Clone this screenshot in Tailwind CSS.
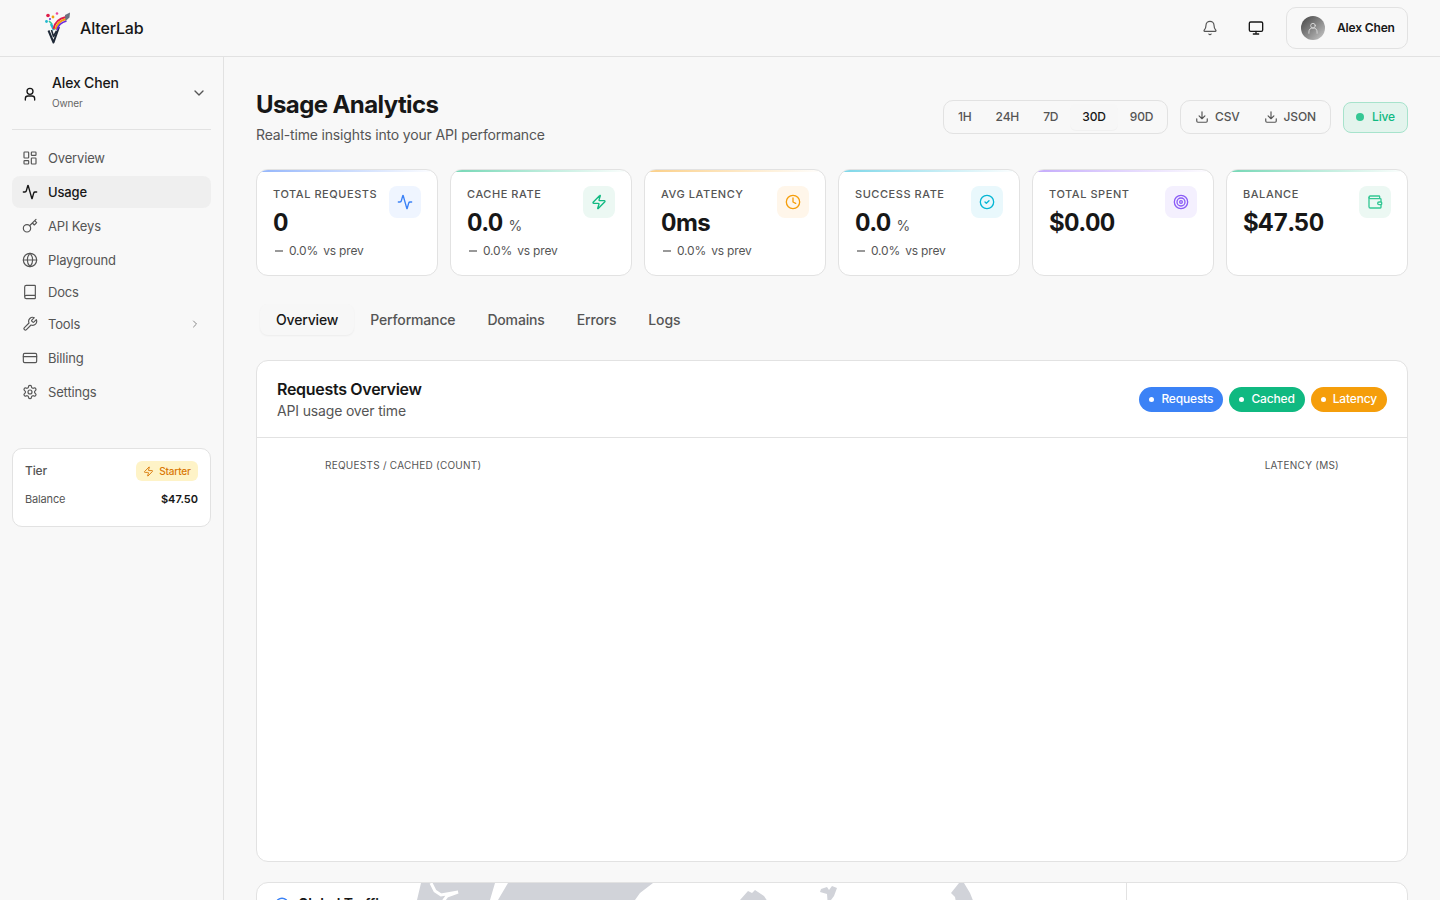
<!DOCTYPE html>
<html lang="en">
<head>
<meta charset="utf-8">
<title>Usage Analytics</title>
<script src="https://cdn.jsdelivr.net/npm/@tailwindcss/browser@4"></script>
</head>
<body class="h-screen overflow-hidden bg-[#f8f8f8] font-['Inter',sans-serif] text-[#171717] tracking-[-0.16px]">
<header class="h-[57px] border-b border-[#e2e2e2] flex items-center pl-[44px] pr-8">
  <svg class="w-[27px] h-[32px]" viewBox="0 0 27 32" fill="none">
    <path d="M4.5 18.5 9.5 30.5 15 15" stroke="#1f2937" stroke-width="2" stroke-linejoin="round"/>
    <path d="M7.5 18 9.5 24.5 12.5 19" stroke="#1f2937" stroke-width="1.6" stroke-linejoin="round"/>
    <path d="M7 12l3 6" stroke="#22b8cf" stroke-width="2.5"/>
    <path d="M5 9l3 3" stroke="#34c794" stroke-width="1.6"/>
    <path d="M9.5 17C10.5 10.5 15 6.5 22 5" stroke="#e11d48" stroke-width="2"/>
    <path d="M11.5 17.5C12.5 12 16 8.5 22.5 7" stroke="#f59e0b" stroke-width="2"/>
    <path d="M13 18C14 13.5 17 10.5 22.5 9" stroke="#6d28d9" stroke-width="1.8"/>
    <path d="M21 3l5-2.500-.5 5-4 3.500z" fill="#6b7280"/>
    <circle cx="4" cy="3.500" r="1.800" fill="#e11d48"/><circle cx="13" cy="1.500" r="1.300" fill="#ec4899"/><circle cx="9" cy="5" r="1.400" fill="#f59e0b"/><circle cx="2.500" cy="9.500" r="1.400" fill="#22b8cf"/><circle cx="6" cy="7" r="1" fill="#6d28d9"/>
  </svg>
  <span class="ml-[9px] text-base font-medium">AlterLab</span>
  <div class="ml-auto flex items-center">
    <svg class="w-4 h-4 text-[#555]" viewBox="0 0 24 24" fill="none" stroke="currentColor" stroke-width="1.75" stroke-linecap="round" stroke-linejoin="round"><path d="M10.3 21a1.94 1.94 0 0 0 3.4 0"/><path d="M3.26 15.33A1 1 0 0 0 4 17h16a1 1 0 0 0 .74-1.67C19.41 13.96 18 12.5 18 8A6 6 0 0 0 6 8c0 4.5-1.41 5.96-2.74 7.33"/></svg>
    <svg class="w-4 h-4 ml-[30px] text-[#171717]" viewBox="0 0 24 24" fill="none" stroke="currentColor" stroke-width="2" stroke-linecap="round" stroke-linejoin="round"><rect x="2" y="3" width="20" height="14" rx="2"/><path d="M8 21h8M12 17v4"/></svg>
    <button class="ml-[22px] w-[122px] h-[42px] border border-[#e2e2e2] rounded-[10px] flex items-center pl-[14px]">
      <span class="w-6 h-6 rounded-full bg-gradient-to-br from-[#444] to-[#ccc] flex items-center justify-center">
        <svg class="w-[14px] h-[14px] text-[#ddd]" viewBox="0 0 24 24" fill="none" stroke="currentColor" stroke-width="1.5" stroke-linecap="round"><circle cx="12" cy="8" r="4"/><path d="M5 21v-2a6 6 0 0 1 14 0v2"/></svg>
      </span>
      <span class="ml-3 text-xs font-semibold whitespace-nowrap">Alex Chen</span>
    </button>
  </div>
</header>
<div class="flex h-[843px]">
  <aside class="w-[224px] shrink-0 border-r border-[#e2e2e2] px-3">
    <div class="h-[73px] border-b border-[#e2e2e2] flex items-center pl-[10px] pr-[4px]">
      <svg class="w-4 h-4 mt-[1px]" viewBox="0 0 24 24" fill="none" stroke="currentColor" stroke-width="2" stroke-linecap="round" stroke-linejoin="round"><circle cx="12" cy="8" r="4.5"/><path d="M5 21v-2a4 4 0 0 1 4-4h6a4 4 0 0 1 4 4v2"/></svg>
      <div class="ml-[14px] -mt-[5px]">
        <div class="text-sm font-medium leading-5">Alex Chen</div>
        <div class="text-[10px] text-[#666] leading-3 mt-[4px]">Owner</div>
      </div>
      <svg class="ml-auto w-4 h-4 text-[#555]" viewBox="0 0 24 24" fill="none" stroke="currentColor" stroke-width="2" stroke-linecap="round" stroke-linejoin="round"><path d="m6 9 6 6 6-6"/></svg>
    </div>
    <nav class="pt-3 text-[13px] text-[#555]">
      <a class="h-8 px-[10px] flex items-center gap-[10px] rounded-lg">
        <svg class="w-4 h-4" viewBox="0 0 24 24" fill="none" stroke="currentColor" stroke-width="1.75" stroke-linejoin="round"><rect x="3" y="3" width="7" height="9" rx="1"/><rect x="14" y="3" width="7" height="5" rx="1"/><rect x="14" y="12" width="7" height="9" rx="1"/><rect x="3" y="16" width="7" height="5" rx="1"/></svg><span class="pt-[2px]">Overview</span></a>
      <a class="mt-0.5 h-8 px-[10px] flex items-center gap-[10px] rounded-lg bg-[#efefef] text-[#171717] font-medium">
        <svg class="w-4 h-4" viewBox="0 0 24 24" fill="none" stroke="currentColor" stroke-width="2" stroke-linecap="round" stroke-linejoin="round"><path d="M22 12h-2.48a2 2 0 0 0-1.93 1.46l-2.35 8.36a.25.25 0 0 1-.48 0L9.24 2.18a.25.25 0 0 0-.48 0l-2.35 8.36A2 2 0 0 1 4.49 12H2"/></svg><span class="pt-[2px]">Usage</span></a>
      <a class="mt-0.5 h-8 px-[10px] flex items-center gap-[10px] rounded-lg">
        <svg class="w-4 h-4" viewBox="0 0 24 24" fill="none" stroke="currentColor" stroke-width="1.75" stroke-linecap="round" stroke-linejoin="round"><circle cx="7.5" cy="15.5" r="5.5"/><path d="m21 2-9.6 9.6M15.5 7.5l3 3L22 7l-3-3"/></svg><span class="pt-[2px]">API Keys</span></a>
      <a class="mt-0.5 h-8 px-[10px] flex items-center gap-[10px] rounded-lg">
        <svg class="w-4 h-4" viewBox="0 0 24 24" fill="none" stroke="currentColor" stroke-width="1.75" stroke-linecap="round" stroke-linejoin="round"><circle cx="12" cy="12" r="10"/><path d="M12 2a14.5 14.5 0 0 0 0 20 14.5 14.5 0 0 0 0-20M2 12h20"/></svg><span class="pt-[2px]">Playground</span></a>
      <a class="h-8 px-[10px] flex items-center gap-[10px] rounded-lg">
        <svg class="w-4 h-4" viewBox="0 0 24 24" fill="none" stroke="currentColor" stroke-width="1.75" stroke-linecap="round" stroke-linejoin="round"><path d="M4 19.5v-15A2.5 2.5 0 0 1 6.5 2H19a1 1 0 0 1 1 1v18a1 1 0 0 1-1 1H6.5a1 1 0 0 1 0-5H20"/></svg><span class="pt-[2px]">Docs</span></a>
      <a class="h-8 px-[10px] flex items-center gap-[10px] rounded-lg">
        <svg class="w-4 h-4" viewBox="0 0 24 24" fill="none" stroke="currentColor" stroke-width="1.75" stroke-linecap="round" stroke-linejoin="round"><path d="M14.7 6.3a1 1 0 0 0 0 1.4l1.6 1.6a1 1 0 0 0 1.4 0l3.77-3.77a6 6 0 0 1-7.94 7.94l-6.91 6.91a2.12 2.12 0 0 1-3-3l6.91-6.91a6 6 0 0 1 7.94-7.94l-3.76 3.76z"/></svg><span class="pt-[2px]">Tools</span>
        <svg class="ml-auto w-3 h-3 text-[#888]" viewBox="0 0 24 24" fill="none" stroke="currentColor" stroke-width="2" stroke-linecap="round" stroke-linejoin="round"><path d="m9 18 6-6-6-6"/></svg></a>
      <a class="mt-0.5 h-8 px-[10px] flex items-center gap-[10px] rounded-lg">
        <svg class="w-4 h-4" viewBox="0 0 24 24" fill="none" stroke="currentColor" stroke-width="1.75" stroke-linecap="round" stroke-linejoin="round"><rect x="2" y="5" width="20" height="14" rx="2"/><path d="M2 10h20"/></svg><span class="pt-[2px]">Billing</span></a>
      <a class="mt-0.5 h-8 px-[10px] flex items-center gap-[10px] rounded-lg">
        <svg class="w-4 h-4" viewBox="0 0 24 24" fill="none" stroke="currentColor" stroke-width="1.75" stroke-linecap="round" stroke-linejoin="round"><path d="M12.22 2h-.44a2 2 0 0 0-2 2v.18a2 2 0 0 1-1 1.73l-.43.25a2 2 0 0 1-2 0l-.15-.08a2 2 0 0 0-2.73.73l-.22.38a2 2 0 0 0 .73 2.73l.15.1a2 2 0 0 1 1 1.72v.51a2 2 0 0 1-1 1.74l-.15.09a2 2 0 0 0-.73 2.73l.22.38a2 2 0 0 0 2.73.73l.15-.08a2 2 0 0 1 2 0l.43.25a2 2 0 0 1 1 1.73V20a2 2 0 0 0 2 2h.44a2 2 0 0 0 2-2v-.18a2 2 0 0 1 1-1.73l.43-.25a2 2 0 0 1 2 0l.15.08a2 2 0 0 0 2.73-.73l.22-.39a2 2 0 0 0-.73-2.73l-.15-.08a2 2 0 0 1-1-1.74v-.5a2 2 0 0 1 1-1.74l.15-.09a2 2 0 0 0 .73-2.73l-.22-.38a2 2 0 0 0-2.73-.73l-.15.08a2 2 0 0 1-2 0l-.43-.25a2 2 0 0 1-1-1.73V4a2 2 0 0 0-2-2z"/><circle cx="12" cy="12" r="3"/></svg><span class="pt-[2px]">Settings</span></a>
    </nav>
    <div class="mt-10 h-[79px] rounded-[10px] border border-[#e2e2e2] bg-white px-3 pt-3">
      <div class="flex items-center justify-between h-5">
        <span class="text-xs font-medium text-[#555]">Tier</span>
        <span class="h-5 w-[62px] rounded-md bg-[#fef3c7] text-[#d97706] text-[10px] font-medium flex items-center justify-center gap-[5px]">
          <svg class="w-[11px] h-[11px]" viewBox="0 0 24 24" fill="none" stroke="currentColor" stroke-width="2" stroke-linecap="round" stroke-linejoin="round"><path d="M4 14a1 1 0 0 1-.78-1.63l9.9-10.2a.5.5 0 0 1 .86.46l-1.92 6.02A1 1 0 0 0 13 10h7a1 1 0 0 1 .78 1.63l-9.9 10.2a.5.5 0 0 1-.86-.46l1.92-6.02A1 1 0 0 0 11 14z"/></svg>Starter</span>
      </div>
      <div class="mt-2 flex items-center justify-between text-[11px] leading-5">
        <span class="text-[#555]">Balance</span><span class="font-semibold tracking-normal">$47.50</span>
      </div>
    </div>
  </aside>
  <main class="flex-1 min-w-0 overflow-hidden px-8 pt-8">
    <div class="flex items-start justify-between h-[80px]">
      <div>
        <h1 class="text-2xl font-bold leading-8 tracking-[-0.6px]">Usage Analytics</h1>
        <p class="text-sm leading-5 text-[#555] mt-[4px]">Real-time insights into your API performance</p>
      </div>
      <div class="flex items-center mt-[11px]">
        <div class="h-[34px] w-[225px] border border-[#e2e2e2] rounded-[10px] px-[3px] flex items-center text-xs font-medium text-[#555]">
          <span class="px-3 h-[26px] flex items-center -ml-[1px]">1H</span>
          <span class="px-3 h-[26px] flex items-center">24H</span>
          <span class="px-3 h-[26px] flex items-center">7D</span>
          <span class="px-3 h-[26px] flex items-center rounded-md bg-[#f7f7f7] text-[#171717] shadow-[0_1px_1px_rgba(0,0,0,0.03)]">30D</span>
          <span class="px-3 h-[26px] flex items-center">90D</span>
        </div>
        <div class="ml-3 h-[34px] w-[151px] border border-[#e2e2e2] rounded-[10px] pl-[14px] flex items-center text-xs font-medium text-[#555]">
          <svg class="w-[14px] h-[14px]" viewBox="0 0 24 24" fill="none" stroke="currentColor" stroke-width="2" stroke-linecap="round" stroke-linejoin="round"><path d="M21 15v4a2 2 0 0 1-2 2H5a2 2 0 0 1-2-2v-4M7 10l5 5 5-5M12 15V3"/></svg>
          <span class="ml-[6px]">CSV</span>
          <svg class="ml-[24px] w-[14px] h-[14px]" viewBox="0 0 24 24" fill="none" stroke="currentColor" stroke-width="2" stroke-linecap="round" stroke-linejoin="round"><path d="M21 15v4a2 2 0 0 1-2 2H5a2 2 0 0 1-2-2v-4M7 10l5 5 5-5M12 15V3"/></svg>
          <span class="ml-[6px]">JSON</span>
        </div>
        <div class="ml-3 h-[31px] w-[65px] rounded-lg border border-[#a7e3cc] bg-[#e3f4ed] flex items-center pl-3 text-xs font-medium text-[#10b981]">
          <span class="w-2 h-2 rounded-full bg-[#34c794]"></span><span class="ml-2">Live</span>
        </div>
      </div>
    </div>
    <div class="grid grid-cols-6 gap-3">
      <div class="relative h-[107px] bg-white border border-[#e2e2e2] rounded-xl overflow-hidden p-4">
        <div class="absolute inset-x-0 top-0 h-[2px] bg-gradient-to-r from-[#93b5fb] to-transparent"></div>
        <div class="flex justify-between items-start">
          <div>
            <div class="text-[11px] font-medium tracking-[0.55px] leading-4 text-[#555] whitespace-nowrap">TOTAL REQUESTS</div>
            <div class="mt-[5px] text-2xl font-bold leading-8 tracking-tight tabular-nums">0</div>
          </div>
          <div class="w-8 h-8 shrink-0 rounded-lg bg-[#eff5ff] flex items-center justify-center text-[#3b82f6]">
            <svg class="w-4 h-4" viewBox="0 0 24 24" fill="none" stroke="currentColor" stroke-width="2" stroke-linecap="round" stroke-linejoin="round"><path d="M22 12h-2.48a2 2 0 0 0-1.93 1.46l-2.35 8.36a.25.25 0 0 1-.48 0L9.24 2.18a.25.25 0 0 0-.48 0l-2.35 8.36A2 2 0 0 1 4.49 12H2"/></svg>
          </div>
        </div>
        <div class="mt-[2px] flex items-center text-xs text-[#555] leading-5"><span class="w-2 h-[1.5px] bg-[#999] ml-[2px] mr-[6px]"></span>0.0%<span class="ml-[5px]">vs prev</span></div>
      </div>
      <div class="relative h-[107px] bg-white border border-[#e2e2e2] rounded-xl overflow-hidden p-4">
        <div class="absolute inset-x-0 top-0 h-[2px] bg-gradient-to-r from-[#74d7b5] to-transparent"></div>
        <div class="flex justify-between items-start">
          <div>
            <div class="text-[11px] font-medium tracking-[0.55px] leading-4 text-[#555] whitespace-nowrap">CACHE RATE</div>
            <div class="mt-[5px] text-2xl font-bold leading-8 tracking-tight tabular-nums">0.0 <span class="text-sm font-normal text-[#555]">%</span></div>
          </div>
          <div class="w-8 h-8 shrink-0 rounded-lg bg-[#ecf8f3] flex items-center justify-center text-[#10b981]">
            <svg class="w-4 h-4" viewBox="0 0 24 24" fill="none" stroke="currentColor" stroke-width="2" stroke-linecap="round" stroke-linejoin="round"><path d="M4 14a1 1 0 0 1-.78-1.63l9.9-10.2a.5.5 0 0 1 .86.46l-1.92 6.02A1 1 0 0 0 13 10h7a1 1 0 0 1 .78 1.63l-9.9 10.2a.5.5 0 0 1-.86-.46l1.92-6.02A1 1 0 0 0 11 14z"/></svg>
          </div>
        </div>
        <div class="mt-[2px] flex items-center text-xs text-[#555] leading-5"><span class="w-2 h-[1.5px] bg-[#999] ml-[2px] mr-[6px]"></span>0.0%<span class="ml-[5px]">vs prev</span></div>
      </div>
      <div class="relative h-[107px] bg-white border border-[#e2e2e2] rounded-xl overflow-hidden p-4">
        <div class="absolute inset-x-0 top-0 h-[2px] bg-gradient-to-r from-[#fbcf87] to-transparent"></div>
        <div class="flex justify-between items-start">
          <div>
            <div class="text-[11px] font-medium tracking-[0.55px] leading-4 text-[#555] whitespace-nowrap">AVG LATENCY</div>
            <div class="mt-[5px] text-2xl font-bold leading-8 tracking-tight tabular-nums">0ms</div>
          </div>
          <div class="w-8 h-8 shrink-0 rounded-lg bg-[#fff6ea] flex items-center justify-center text-[#f59e0b]">
            <svg class="w-4 h-4" viewBox="0 0 24 24" fill="none" stroke="currentColor" stroke-width="2" stroke-linecap="round" stroke-linejoin="round"><circle cx="12" cy="12" r="10"/><path d="M12 6v6l4 2"/></svg>
          </div>
        </div>
        <div class="mt-[2px] flex items-center text-xs text-[#555] leading-5"><span class="w-2 h-[1.5px] bg-[#999] ml-[2px] mr-[6px]"></span>0.0%<span class="ml-[5px]">vs prev</span></div>
      </div>
      <div class="relative h-[107px] bg-white border border-[#e2e2e2] rounded-xl overflow-hidden p-4">
        <div class="absolute inset-x-0 top-0 h-[2px] bg-gradient-to-r from-[#7cd6e8] to-transparent"></div>
        <div class="flex justify-between items-start">
          <div>
            <div class="text-[11px] font-medium tracking-[0.55px] leading-4 text-[#555] whitespace-nowrap">SUCCESS RATE</div>
            <div class="mt-[5px] text-2xl font-bold leading-8 tracking-tight tabular-nums">0.0 <span class="text-sm font-normal text-[#555]">%</span></div>
          </div>
          <div class="w-8 h-8 shrink-0 rounded-lg bg-[#e9f8fc] flex items-center justify-center text-[#06b6d4]">
            <svg class="w-4 h-4" viewBox="0 0 24 24" fill="none" stroke="currentColor" stroke-width="2" stroke-linecap="round" stroke-linejoin="round"><circle cx="12" cy="12" r="10"/><path d="m9 12 2 2 4-4"/></svg>
          </div>
        </div>
        <div class="mt-[2px] flex items-center text-xs text-[#555] leading-5"><span class="w-2 h-[1.5px] bg-[#999] ml-[2px] mr-[6px]"></span>0.0%<span class="ml-[5px]">vs prev</span></div>
      </div>
      <div class="relative h-[107px] bg-white border border-[#e2e2e2] rounded-xl overflow-hidden p-4">
        <div class="absolute inset-x-0 top-0 h-[2px] bg-gradient-to-r from-[#c4aafb] to-transparent"></div>
        <div class="flex justify-between items-start">
          <div>
            <div class="text-[11px] font-medium tracking-[0.55px] leading-4 text-[#555] whitespace-nowrap">TOTAL SPENT</div>
            <div class="mt-[5px] text-2xl font-bold leading-8 tracking-tight tabular-nums">$0.00</div>
          </div>
          <div class="w-8 h-8 shrink-0 rounded-lg bg-[#f4f0fe] flex items-center justify-center text-[#8b5cf6]">
            <svg class="w-4 h-4" viewBox="0 0 24 24" fill="none" stroke="currentColor" stroke-width="2" stroke-linecap="round" stroke-linejoin="round"><circle cx="12" cy="12" r="10"/><circle cx="12" cy="12" r="6"/><circle cx="12" cy="12" r="2"/></svg>
          </div>
        </div>
      </div>
      <div class="relative h-[107px] bg-white border border-[#e2e2e2] rounded-xl overflow-hidden p-4">
        <div class="absolute inset-x-0 top-0 h-[2px] bg-gradient-to-r from-[#74d7b5] to-transparent"></div>
        <div class="flex justify-between items-start">
          <div>
            <div class="text-[11px] font-medium tracking-[0.55px] leading-4 text-[#555] whitespace-nowrap">BALANCE</div>
            <div class="mt-[5px] text-2xl font-bold leading-8 tracking-tight tabular-nums">$47.50</div>
          </div>
          <div class="w-8 h-8 shrink-0 rounded-lg bg-[#ecf8f3] flex items-center justify-center text-[#34c794]">
            <svg class="w-4 h-4" viewBox="0 0 24 24" fill="none" stroke="currentColor" stroke-width="2" stroke-linecap="round" stroke-linejoin="round"><path d="M19 7V4a1 1 0 0 0-1-1H5a2 2 0 0 0 0 4h15a1 1 0 0 1 1 1v4h-3a2 2 0 0 0 0 4h3a1 1 0 0 0 1-1v-2a1 1 0 0 0-1-1"/><path d="M3 5v14a2 2 0 0 0 2 2h15a1 1 0 0 0 1-1v-4"/></svg>
          </div>
        </div>
      </div>
    </div>
    <div class="mt-[28px] h-[31px] pl-1 flex items-center text-sm font-medium text-[#555]">
      <span class="px-4 h-[31px] flex items-center rounded-lg bg-[#f7f7f7] text-[#171717] shadow-[0_1px_2px_rgba(0,0,0,0.05)]">Overview</span>
      <span class="px-4">Performance</span>
      <span class="px-4">Domains</span>
      <span class="px-4">Errors</span>
      <span class="px-4">Logs</span>
    </div>
    <section class="mt-[25px] h-[502px] bg-white border border-[#e2e2e2] rounded-xl">
      <div class="h-[77px] border-b border-[#e2e2e2] px-5 flex items-center justify-between">
        <div class="pt-[2px]">
          <h2 class="text-base font-semibold leading-5 tracking-[-0.3px]">Requests Overview</h2>
          <p class="text-sm leading-5 text-[#555] mt-[2px]">API usage over time</p>
        </div>
        <div class="flex gap-[6px] text-xs font-medium text-white">
          <span class="h-[25px] px-[10px] rounded-full bg-[#3b82f6] flex items-center gap-[7px]"><span class="w-[5px] h-[5px] rounded-full bg-white"></span>Requests</span>
          <span class="h-[25px] px-[10px] rounded-full bg-[#10b981] flex items-center gap-[7px]"><span class="w-[5px] h-[5px] rounded-full bg-white"></span>Cached</span>
          <span class="h-[25px] px-[10px] rounded-full bg-[#f59e0b] flex items-center gap-[7px]"><span class="w-[5px] h-[5px] rounded-full bg-white"></span>Latency</span>
        </div>
      </div>
      <div class="pl-[68px] pr-[68px] pt-[21px] flex justify-between text-[10px] leading-3 text-[#555] tracking-wide">
        <span>REQUESTS / CACHED (COUNT)</span><span>LATENCY (MS)</span>
      </div>
    </section>
    <section class="relative mt-5 h-[300px] bg-white border border-[#e2e2e2] rounded-xl overflow-hidden">
      <svg class="absolute left-0 top-0 w-[870px] h-[40px]" viewBox="0 0 870 40" fill="#d1d3d9">
        <path d="M164 0H396L383 10 378 17 376 40H158L160 17z"/>
        <path d="M238 0H251L241 17 238 40H230L233 17z" fill="#fff"/>
        <path d="M174 0 178 8 184 12 201 9 190 13 187 17 186 24" fill="none" stroke="#fff" stroke-width="3"/>
        <path d="M483 17 491 8 495 10 498 7 507 13 513 22 516 40H483z"/>
        <path d="M564 6 570 4 572 7 575 3 580 5 577 13 574 17 573 24H571L570 11 563 9z"/>
        <path d="M702 0H707L713 10 717 20 720 40H703L698 14 694 10z"/>
      </svg>
      <div class="absolute left-[869px] top-0 bottom-0 border-l border-[#e2e2e2]"></div>
      <div class="absolute left-[18px] top-[11px] flex items-center gap-[9px] text-sm font-semibold leading-5">
        <svg class="w-[14px] h-[14px] text-[#3b82f6]" viewBox="0 0 24 24" fill="none" stroke="currentColor" stroke-width="2.5"><circle cx="12" cy="12" r="10"/></svg>Global Traffic</div>
    </section>
  </main>
</div>
</body>
</html>
